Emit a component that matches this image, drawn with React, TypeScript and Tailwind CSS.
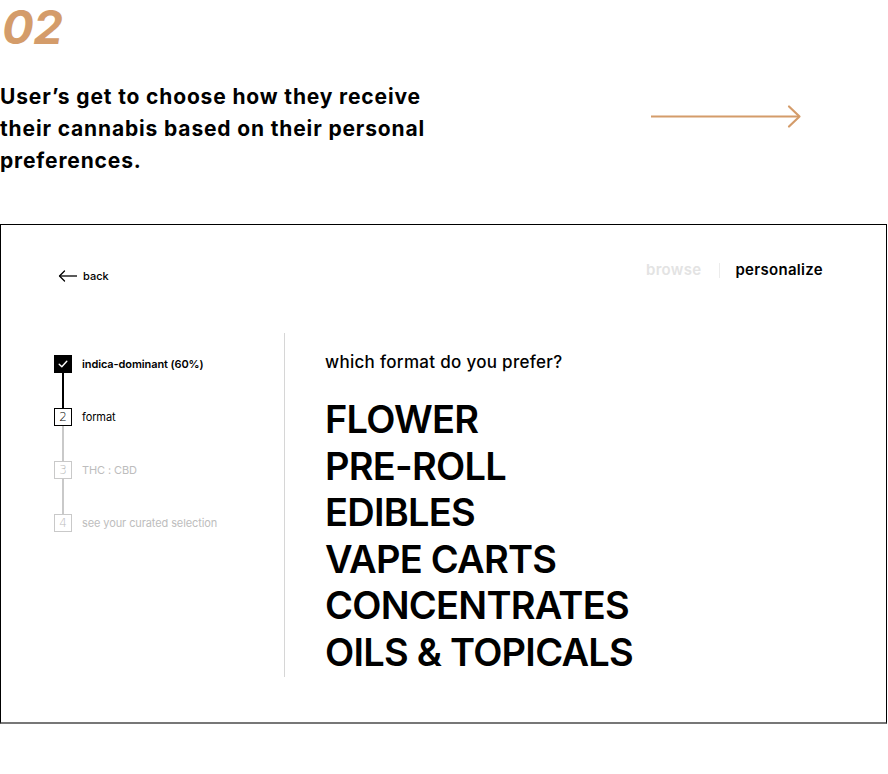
import React from "react";

const font = { fontFamily: "Inter, 'Noto Sans', sans-serif" };

function Check() {
  return (
    <svg width="12" height="12" viewBox="0 0 12 12" fill="none">
      <path d="M2.2 6.3 L4.8 8.8 L9.8 3.2" stroke="white" strokeWidth="1.4" strokeLinecap="round" strokeLinejoin="round" />
    </svg>
  );
}

const steps = [
  { n: "✓", label: "indica-dominant (60%)", state: "done" },
  { n: "2", label: "format", state: "active" },
  { n: "3", label: "THC : CBD", state: "todo" },
  { n: "4", label: "see your curated selection", state: "todo" },
];

export default function App() {
  return (
    <div className="w-[888px] h-[774px] bg-white text-black overflow-hidden" style={font}>
      <div className="h-[224px] relative">
        <div className="pt-[1px] pl-[2px] text-[47px] leading-[52px] font-bold italic text-[#d49c6a] tracking-[-0.5px]">
          <span className="pr-[4px]">02</span>
        </div>
        <div className="flex items-start mt-[28px]">
          <p className="w-[460px] text-[21px] leading-[32px] font-bold tracking-[0.85px]">
            User’s get to choose how they receive
            <br />
            their cannabis based on their personal
            <br />
            preferences.
          </p>
          <div className="ml-[190px] mt-[23px]">
            <svg width="152" height="26" viewBox="0 0 152 26" fill="none">
              <path d="M1 12.5 H149" stroke="#d49c6a" strokeWidth="2.2" />
              <path d="M139 2.5 L149.5 12.5 L139 22.5" stroke="#d49c6a" strokeWidth="2.2" strokeLinecap="round" strokeLinejoin="round" />
            </svg>
          </div>
        </div>
      </div>

      <div className="w-[887px] h-[500px] border-l border-t border-r border-black border-b-2 border-b-[#777777] flex flex-col">
        <div className="flex items-start justify-between pl-[57px] pr-[63px] pt-[34px] h-[108px]">
          <div className="flex items-center gap-[5px] mt-[9px]">
            <svg width="20" height="12" viewBox="0 0 20 12" fill="none">
              <path d="M19 6 H1.5" stroke="black" strokeWidth="1.3" />
              <path d="M6.5 1 L1.5 6 L6.5 11" stroke="black" strokeWidth="1.3" strokeLinecap="round" strokeLinejoin="round" />
            </svg>
            <span className="text-[11px] font-medium">back</span>
          </div>
          <div className="flex items-center text-[15px] font-semibold tracking-[0.3px]">
            <span className="text-[#e3e3e3]">browse</span>
            <span className="w-px h-[15px] bg-[#ececec] ml-[18px] mr-[15px]" />
            <span>personalize</span>
          </div>
        </div>

        <div className="flex">
          <div className="w-[284px] h-[344px] border-r border-[#d6d6d6] pl-[53px] pt-[22px]">
            <div className="flex flex-col">
              {steps.map((s, i) => {
                const gray = s.state === "todo";
                return (
                  <React.Fragment key={i}>
                    <div className="flex items-center gap-[10px] h-[18px]">
                      {s.state === "done" ? (
                        <div className="w-[18px] h-[18px] bg-black flex items-center justify-center">
                          <Check />
                        </div>
                      ) : (
                        <div
                          className={
                            "w-[18px] h-[18px] border-[1.5px] flex items-center justify-center text-[12px] leading-none " +
                            (gray ? "border-[#c9c9c9] text-[#bdbdbd]" : "border-black text-black")
                          }
                          style={{ fontFamily: "'DejaVu Sans', sans-serif", fontWeight: 300 }}
                        >
                          {s.n}
                        </div>
                      )}
                      <span
                        className={
                          "text-[11px] tracking-[-0.1px] " +
                          (s.state === "done" ? "font-semibold text-black" : gray ? "text-[#bdbdbd]" : "text-black")
                        }
                      >
                        {s.label}
                      </span>
                    </div>
                    {i < steps.length - 1 && (
                      <div className="w-[18px] h-[35px] flex justify-center">
                        <div className={"w-[1.5px] h-full " + (i === 0 ? "bg-black" : "bg-[#c9c9c9]")} />
                      </div>
                    )}
                  </React.Fragment>
                );
              })}
            </div>
          </div>

          <div className="pl-[40px] pt-[17px]">
            <div className="text-[17px] leading-[24px] font-medium tracking-[0.3px]">which format do you prefer?</div>
            <div className="mt-[22px] text-[38px] leading-[46.6px] font-semibold tracking-[-0.75px]">
              <div>FLOWER</div>
              <div>PRE-ROLL</div>
              <div>EDIBLES</div>
              <div>VAPE CARTS</div>
              <div>CONCENTRATES</div>
              <div>OILS &amp; TOPICALS</div>
            </div>
          </div>
        </div>
      </div>
    </div>
  );
}
